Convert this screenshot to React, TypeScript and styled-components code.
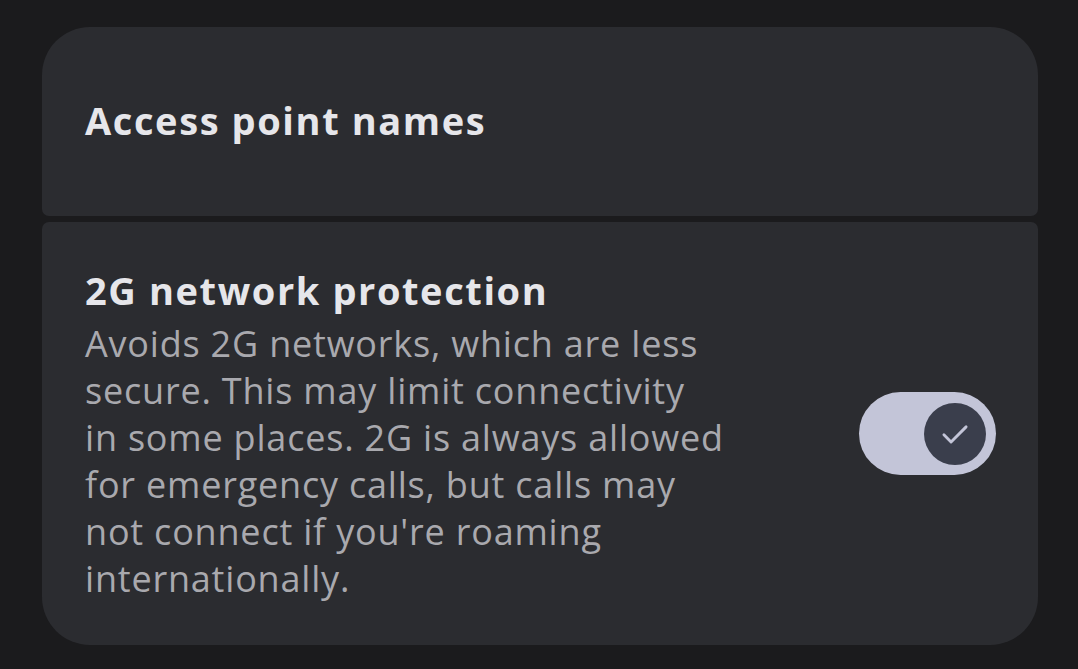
import React, { useState } from "react";
import styled, { createGlobalStyle } from "styled-components";

const GlobalStyle = createGlobalStyle`
	html, body {
		margin: 0;
		padding: 0;
		background: #1b1b1d;
	}
	body {
		font-family: "Open Sans", Roboto, "Liberation Sans", sans-serif;
		-webkit-font-smoothing: antialiased;
	}
`;

const Page = styled.main`
	width: 1078px;
	height: 669px;
	box-sizing: border-box;
	padding: 27px 40px 0 42px;
	display: flex;
	flex-direction: column;
	gap: 6px;
`;

const Card = styled.section<{ $position: "top" | "bottom" }>`
	background: #2b2c30;
	border-radius: ${({ $position }) =>
		$position === "top" ? "48px 48px 7px 7px" : "7px 7px 48px 48px"};
	box-sizing: border-box;
	display: flex;
	align-items: center;
	justify-content: space-between;
	padding: 0 42px 0 43px;
`;

const LinkCard = styled(Card)`
	height: 189px;
	padding-bottom: 3px;
`;

const SwitchCard = styled(Card)`
	height: 423px;
`;

const TextBlock = styled.div`
	display: flex;
	flex-direction: column;
	max-width: 700px;
`;

const Title = styled.h2`
	margin: 0;
	font-size: 38px;
	font-weight: 700;
	color: #e6e6ea;
	line-height: 48px;
	letter-spacing: 1.6px;
`;

const Summary = styled.p`
	margin: 6px 0 0;
	font-size: 36px;
	line-height: 47px;
	color: #a9a9ae;
	letter-spacing: 0.8px;
	white-space: nowrap;
`;

const Track = styled.button<{ $on: boolean }>`
	width: 137px;
	height: 83px;
	border: none;
	padding: 0 10px;
	border-radius: 42px;
	background: ${({ $on }) => ($on ? "#c3c5d8" : "#44464f")};
	display: flex;
	align-items: center;
	justify-content: ${({ $on }) => ($on ? "flex-end" : "flex-start")};
	cursor: pointer;
	flex-shrink: 0;
`;

const Thumb = styled.span`
	width: 62px;
	height: 62px;
	border-radius: 50%;
	background: #3a3e4c;
	display: flex;
	align-items: center;
	justify-content: center;
`;

const CheckIcon = () => (
	<svg width="38" height="38" viewBox="0 0 24 24" fill="none">
		<path
			d="M5 12.5l4.5 4.5 9.5-9.5"
			stroke="#c3c5d8"
			strokeWidth="1.8"
			strokeLinecap="round"
			strokeLinejoin="round"
		/>
	</svg>
);

const summaryLines = [
	"Avoids 2G networks, which are less",
	"secure. This may limit connectivity",
	"in some places. 2G is always allowed",
	"for emergency calls, but calls may",
	"not connect if you're roaming",
	"internationally.",
];

const App = () => {
	const [protect, setProtect] = useState(true);

	return (
		<>
			<GlobalStyle />
			<Page>
				<LinkCard $position="top">
					<Title>Access point names</Title>
				</LinkCard>
				<SwitchCard $position="bottom">
					<TextBlock>
						<Title>2G network protection</Title>
						<Summary>
							{summaryLines.map((line, i) => (
								<React.Fragment key={i}>
									{line}
									{i < summaryLines.length - 1 && <br />}
								</React.Fragment>
							))}
						</Summary>
					</TextBlock>
					<Track
						$on={protect}
						role="switch"
						aria-checked={protect}
						onClick={() => setProtect(!protect)}
					>
						<Thumb>{protect && <CheckIcon />}</Thumb>
					</Track>
				</SwitchCard>
			</Page>
		</>
	);
};

export default App;
